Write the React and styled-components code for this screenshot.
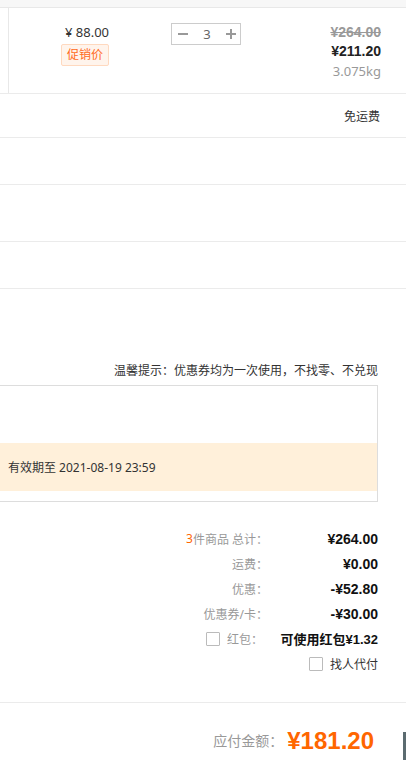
import React from "react";
import styled, { createGlobalStyle } from "styled-components";

const GlobalStyle = createGlobalStyle`
  body {
    margin: 0;
    background: #fff;
    font-family: "Noto Sans", "Noto Sans CJK SC", sans-serif;
    color: #333;
    overflow: hidden;
  }
`;

const summary = [
  { label: "运费：", value: "¥0.00" },
  { label: "优惠：", value: "-¥52.80" },
  { label: "优惠券/卡：", value: "-¥30.00" },
];

export default function App() {
  return (
    <Page>
      <GlobalStyle />
      <TopStrip />
      <ProductWrap>
        <ProductRow>
          <PriceCol>
            <UnitPrice>¥ 88.00</UnitPrice>
            <PromoTag>促销价</PromoTag>
          </PriceCol>
          <Quantity>
            <QtyButton>
              <Minus />
            </QtyButton>
            <QtyValue>3</QtyValue>
            <QtyButton>
              <Plus />
            </QtyButton>
          </Quantity>
          <TotalCol>
            <OldPrice>¥264.00</OldPrice>
            <NewPrice>¥211.20</NewPrice>
            <Weight>3.075kg</Weight>
          </TotalCol>
        </ProductRow>
      </ProductWrap>
      <InfoRow $h={43}>免运费</InfoRow>
      <InfoRow $h={46} />
      <InfoRow $h={56} />
      <InfoRow $h={46} />

      <Notice>温馨提示：优惠券均为一次使用，不找零、不兑现</Notice>
      <CouponBox>
        <CouponBand>有效期至 2021-08-19 23:59</CouponBand>
      </CouponBox>

      <Summary>
        <Label>
          <Accent>3</Accent>件商品 总计：
        </Label>
        <Value>¥264.00</Value>
        {summary.map((s) => (
          <React.Fragment key={s.label}>
            <Label>{s.label}</Label>
            <Value>{s.value}</Value>
          </React.Fragment>
        ))}
        <Label>
          <Check />
          <LabelText>红包：</LabelText>
        </Label>
        <Value $small>可使用红包¥1.32</Value>
        <Label />
        <Value $plain>
          <Check />
          找人代付
        </Value>
      </Summary>

      <BottomBar>
        <PayLabel>应付金额：</PayLabel>
        <PayAmount>¥181.20</PayAmount>
        <SubmitButton aria-label="提交订单" />
      </BottomBar>
    </Page>
  );
}

const Page = styled.div`
  width: 406px;
  height: 760px;
  overflow: hidden;
`;

const TopStrip = styled.div`
  height: 7px;
  background: #f7f7f7;
  border-bottom: 1px solid #e8e8e8;
`;

const ProductWrap = styled.div`
  border-bottom: 1px solid #ebebeb;
`;

const ProductRow = styled.div`
  display: flex;
  align-items: flex-start;
  height: 70px;
  margin-left: 8px;
  padding-top: 15px;
  border-left: 1px solid #e8e8e8;
`;

const PriceCol = styled.div`
  width: 100px;
  display: flex;
  flex-direction: column;
  align-items: flex-end;
`;

const UnitPrice = styled.div`
  font-size: 13px;
  line-height: 18px;
  color: #333;
`;

const PromoTag = styled.span`
  margin-top: 3px;
  padding: 0 5px;
  font-size: 12px;
  line-height: 20px;
  color: #ff6a1a;
  background: #fff4ec;
  border: 1px solid #ffd9bf;
  border-radius: 2px;
`;

const Quantity = styled.div`
  margin-left: 62px;
  width: 58px;
  height: 20px;
  padding: 0 4px 0 6px;
  border: 1px solid #ccc;
  display: flex;
  align-items: center;
  justify-content: space-between;
`;

const QtyButton = styled.span`
  position: relative;
  width: 10px;
  height: 10px;
  display: flex;
  align-items: center;
  justify-content: center;
`;

const Minus = styled.span`
  width: 10px;
  height: 2px;
  background: #999;
`;

const Plus = styled(Minus)`
  &::after {
    content: "";
    position: absolute;
    left: 4px;
    top: 0;
    width: 2px;
    height: 10px;
    background: #999;
  }
`;

const QtyValue = styled.span`
  font-size: 13px;
  color: #666;
`;

const TotalCol = styled.div`
  flex: 1;
  display: flex;
  flex-direction: column;
  align-items: flex-end;
  padding-right: 25px;
  font-family: "Liberation Sans", "Noto Sans CJK SC", sans-serif;
`;

const OldPrice = styled.div`
  font-size: 14px;
  line-height: 18px;
  font-weight: 700;
  color: #999;
  text-decoration: line-through;
`;

const NewPrice = styled.div`
  font-size: 14px;
  line-height: 20px;
  font-weight: 700;
  color: #222;
`;

const Weight = styled.div`
  font-family: "Noto Sans", "Noto Sans CJK SC", sans-serif;
  font-size: 13px;
  line-height: 20px;
  color: #999;
`;

const InfoRow = styled.div`
  height: ${(p) => p.$h}px;
  border-bottom: 1px solid #ebebeb;
  display: flex;
  align-items: center;
  justify-content: flex-end;
  padding-right: 26px;
  font-size: 12px;
  color: #333;
`;

const Notice = styled.div`
  margin-top: 73px;
  padding-right: 28px;
  text-align: right;
  font-size: 12px;
  line-height: 18px;
  color: #333;
`;

const CouponBox = styled.div`
  margin: 5px 28px 0 -10px;
  padding: 57px 0 10px;
  border: 1px solid #ddd;
`;

const CouponBand = styled.div`
  height: 48px;
  display: flex;
  align-items: center;
  padding-left: 17px;
  background: #fff0da;
  font-size: 12px;
  color: #333;
`;

const Summary = styled.div`
  display: grid;
  grid-template-columns: 268px 110px;
  grid-auto-rows: 25px;
  align-items: center;
  margin-top: 24px;
`;

const Label = styled.div`
  display: flex;
  align-items: center;
  justify-content: flex-end;
  font-size: 12px;
  color: #999;
`;

const LabelText = styled.span`
  padding-right: 5px;
`;

const Accent = styled.span`
  color: #f60;
`;

const Value = styled.div`
  display: flex;
  align-items: center;
  justify-content: flex-end;
  font-family: ${(p) =>
    p.$plain
      ? `"Noto Sans", "Noto Sans CJK SC", sans-serif`
      : `"Liberation Sans", "Noto Sans CJK SC", sans-serif`};
  font-size: ${(p) => (p.$small ? 13 : p.$plain ? 12 : 14)}px;
  font-weight: ${(p) => (p.$plain ? 400 : 700)};
  color: ${(p) => (p.$plain ? "#333" : "#111")};
`;

const Check = styled.span`
  width: 12px;
  height: 12px;
  margin-right: 7px;
  border: 1px solid #bbb;
  border-radius: 1px;
  background: #fff;
`;

const BottomBar = styled.div`
  margin-top: 26px;
  border-top: 1px solid #ebebeb;
  height: 56px;
  display: flex;
  align-items: flex-start;
  justify-content: flex-end;
  padding-top: 24px;
  box-sizing: border-box;
`;

const PayLabel = styled.span`
  font-size: 14px;
  line-height: 28px;
  color: #999;
`;

const PayAmount = styled.span`
  margin-left: 4px;
  font-family: "Liberation Sans", sans-serif;
  font-size: 24px;
  line-height: 28px;
  font-weight: 700;
  color: #ff6600;
`;

const SubmitButton = styled.button`
  flex-shrink: 0;
  width: 120px;
  height: 40px;
  margin: 5px -117px 0 29px;
  border: none;
  background: #5b6b70;
`;
